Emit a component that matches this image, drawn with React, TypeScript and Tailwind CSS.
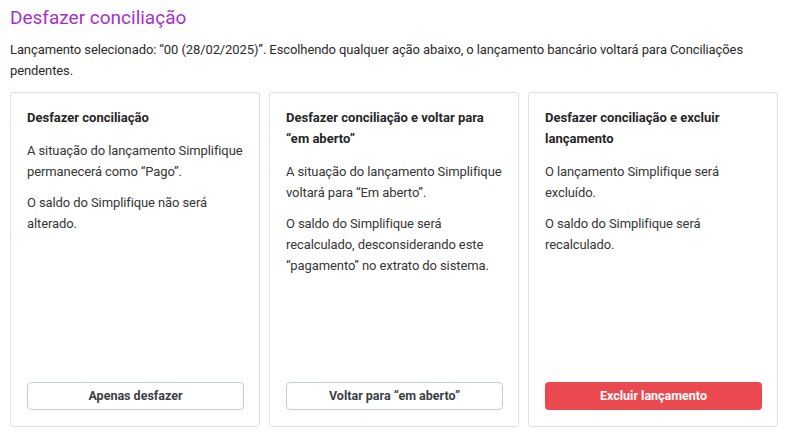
import React from 'react';

type Option = {
  title: React.ReactNode;
  paragraphs: string[];
  action: string;
  danger?: boolean;
};

const options: Option[] = [
  {
    title: 'Desfazer conciliação',
    paragraphs: [
      'A situação do lançamento Simplifique permanecerá como “Pago”.',
      'O saldo do Simplifique não será alterado.',
    ],
    action: 'Apenas desfazer',
  },
  {
    title: 'Desfazer conciliação e voltar para “em aberto”',
    paragraphs: [
      'A situação do lançamento Simplifique voltará para “Em aberto”.',
      'O saldo do Simplifique será recalculado, desconsiderando este “pagamento” no extrato do sistema.',
    ],
    action: 'Voltar para “em aberto”',
  },
  {
    title: 'Desfazer conciliação e excluir lançamento',
    paragraphs: ['O lançamento Simplifique será excluído.', 'O saldo do Simplifique será recalculado.'],
    action: 'Excluir lançamento',
    danger: true,
  },
];

const OptionCard: React.FC<{ option: Option }> = ({ option }) => (
  <div className="flex flex-col border border-[#e1e1e1] rounded-[3px] bg-white pt-[14px] pb-[16px] pl-[16px]">
    <h3 className="text-[13px] leading-[21px] font-bold text-[#262626] mb-[12px] pr-[24px]">{option.title}</h3>
    <div className="flex flex-col gap-[10px] text-[13px] leading-[21px] tracking-[-0.1px] text-[#363636] pr-[12px]">
      {option.paragraphs.map((p) => (
        <p key={p}>{p}</p>
      ))}
    </div>
    <div className="mt-auto pr-[15px]">
      <button
        className={
          option.danger
            ? 'w-full h-[28px] rounded-[4px] bg-[#ea4a4f] text-white text-[12.5px] font-bold'
            : 'w-full h-[28px] rounded-[4px] border border-[#c6ccd4] bg-white text-[#3b3f45] text-[12.5px] font-bold'
        }
      >
        {option.action}
      </button>
    </div>
  </div>
);

export default function App() {
  return (
    <div className="w-[788px] h-[443px] bg-white px-[10px] pt-[6px] font-['Roboto',sans-serif]">
      <h1 className="text-[19px] leading-[24px] font-normal text-[#a72fd0]">Desfazer conciliação</h1>
      <p className="mt-[9px] max-w-[766px] text-[13px] leading-[21px] tracking-[-0.1px] text-[#2b2b2b]">
        Lançamento selecionado: “00 (28/02/2025)”. Escolhendo qualquer ação abaixo, o lançamento bancário voltará para Conciliações
        pendentes.
      </p>
      <div className="grid grid-cols-3 gap-[9px] mt-[11px] h-[335px] w-[768px]">
        {options.map((o, i) => (
          <OptionCard key={i} option={o} />
        ))}
      </div>
    </div>
  );
}
